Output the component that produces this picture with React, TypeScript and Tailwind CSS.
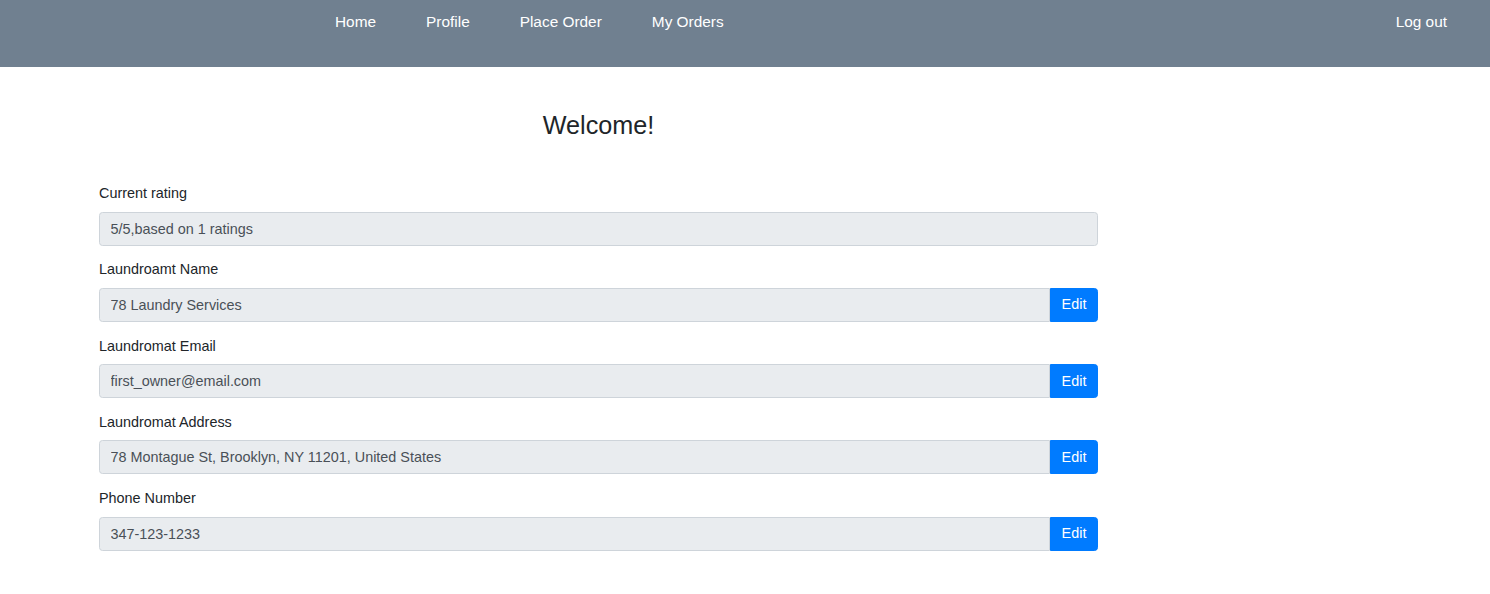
const fields = [
  { label: "Laundroamt Name", value: "78 Laundry Services" },
  { label: "Laundromat Email", value: "first_owner@email.com" },
  { label: "Laundromat Address", value: "78 Montague St, Brooklyn, NY 11201, United States" },
  { label: "Phone Number", value: "347-123-1233" },
];

const navLinks = ["Home", "Profile", "Place Order", "My Orders"];

export default function App() {
  return (
    <div className="min-h-[594px] bg-white font-['Liberation_Sans',Arial,sans-serif] text-[14.4px] text-[#212529]">
      <nav className="flex h-[67px] items-start bg-[#708090] pt-[10px] text-[15.4px] leading-[1.5] text-white">
        <ul className="ml-[310px] flex">
          {navLinks.map((link) => (
            <li key={link}>
              <a href="#" className="block px-[25px]">
                {link}
              </a>
            </li>
          ))}
        </ul>
        <a href="#" className="ml-auto mr-[43px]">
          Log out
        </a>
      </nav>

      <main className="ml-[99px] w-[999px]">
        <h3 className="mt-[43px] mb-[43px] text-center text-[25.2px] leading-[1.2] font-normal">
          Welcome!
        </h3>

        <div className="mb-[13.75px]">
          <label className="mb-[7px] block h-[21.5px] leading-[21.5px]">Current rating</label>
          <input
            readOnly
            value="5/5,based on 1 ratings"
            className="block h-[34px] w-full rounded-[3.5px] border border-[#ced4da] bg-[#e9ecef] px-[10.5px] text-[#495057] outline-none"
          />
        </div>

        {fields.map((f) => (
          <div key={f.label} className="mb-[13.75px]">
            <label className="mb-[7px] block h-[21.5px] leading-[21.5px]">{f.label}</label>
            <div className="flex h-[34px]">
              <input
                readOnly
                value={f.value}
                className="block h-full min-w-0 flex-1 rounded-l-[3.5px] border border-[#ced4da] bg-[#e9ecef] px-[10.5px] text-[#495057] outline-none"
              />
              <button
                type="button"
                className="h-full w-[48px] rounded-r-[3.5px] border border-[#007bff] bg-[#007bff] text-center leading-[21px] text-white"
              >
                Edit
              </button>
            </div>
          </div>
        ))}
      </main>
    </div>
  );
}
